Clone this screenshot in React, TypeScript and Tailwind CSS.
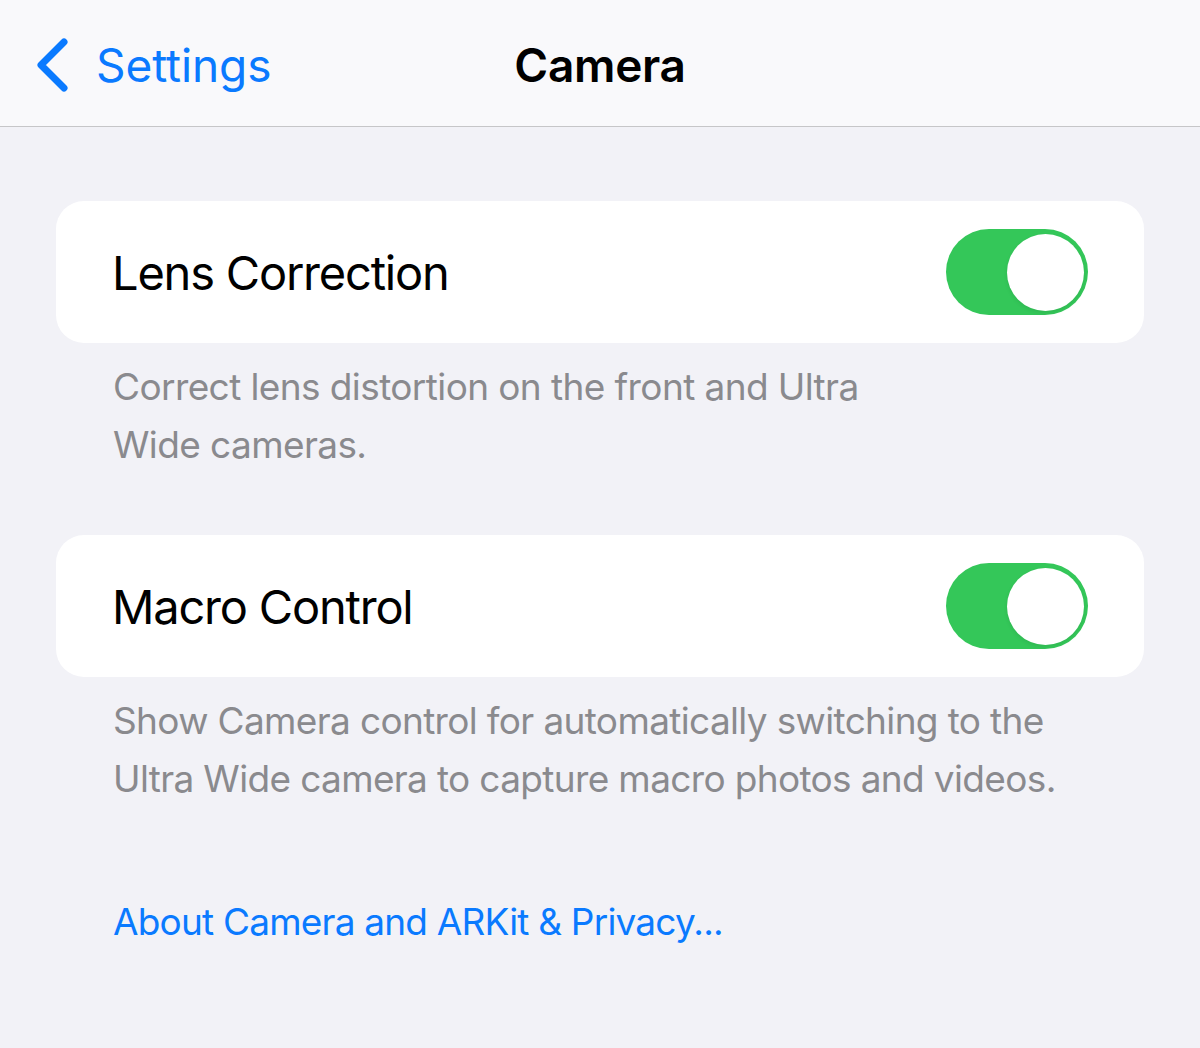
import React from "react";

function Toggle() {
  return (
    <div className="w-[142px] h-[86px] rounded-full bg-[#34c759] flex items-center justify-end pr-[4px] shrink-0">
      <div className="w-[77px] h-[77px] rounded-full bg-white shadow-[0_2px_4px_rgba(0,0,0,0.08)]" />
    </div>
  );
}

function Card({ label }: { label: string }) {
  return (
    <div className="mx-[56px] h-[142px] rounded-[28px] bg-white flex items-center justify-between pl-[56px] pr-[56px]">
      <span className="text-[47px] leading-none text-black tracking-[-1.2px] whitespace-nowrap">{label}</span>
      <Toggle />
    </div>
  );
}

export default function App() {
  return (
    <div
      className="w-[1200px] h-[1048px] bg-[#f2f2f7] overflow-hidden"
      style={{ fontFamily: "Inter, 'Noto Sans', sans-serif" }}
    >
      <div className="h-[127px] bg-[#f9f9fb] border-b border-[#c6c6c8] relative flex items-center">
        <div className="flex items-center pl-[36px] pt-[4px]">
          <svg width="34" height="54" viewBox="0 0 34 54" className="mr-[26px]">
            <path d="M28 4 L5 27 L28 50" fill="none" stroke="#0a7aff" strokeWidth="7" strokeLinecap="round" strokeLinejoin="round" />
          </svg>
          <span className="text-[46px] leading-none text-[#0a7aff] tracking-[-0.1px]">Settings</span>
        </div>
        <div className="absolute left-0 right-0 top-0 bottom-0 flex items-center justify-center pt-[4px]">
          <span className="text-[46px] leading-none font-semibold text-black tracking-[-0.3px]">Camera</span>
        </div>
      </div>

      <div className="pt-[74px]">
        <Card label="Lens Correction" />
        <div className="px-[113px] pt-[15px] text-[37px] leading-[58px] text-[#8a8a8e] tracking-[-0.6px] whitespace-nowrap">
          Correct lens distortion on the front and Ultra
          <br />
          Wide cameras.
        </div>
        <div className="pt-[61px]">
          <Card label="Macro Control" />
        </div>
        <div className="px-[113px] pt-[15px] text-[37px] leading-[58px] text-[#8a8a8e] tracking-[-0.65px] whitespace-nowrap">
          Show Camera control for automatically switching to the
          <br />
          Ultra Wide camera to capture macro photos and videos.
        </div>
        <div className="px-[113px] pt-[85px] text-[37px] leading-[58px] text-[#0a7aff] tracking-[-0.8px] whitespace-nowrap">
          About Camera and ARKit &amp; Privacy...
        </div>
      </div>
    </div>
  );
}
